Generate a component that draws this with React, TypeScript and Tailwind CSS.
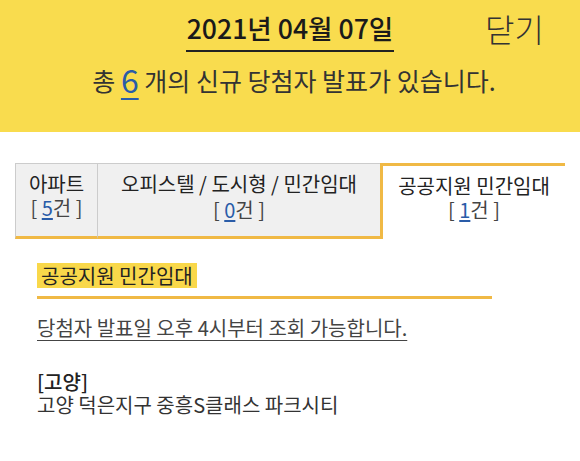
import React from "react";

const font = { fontFamily: '"Noto Sans CJK KR", "Noto Sans", sans-serif' };

function Count({ n }: { n: number }) {
  return (
    <span className="text-[#444]">
      [ <span className="text-[#2a5ca8] underline underline-offset-2">{n}</span>건 ]
    </span>
  );
}

export default function App() {
  return (
    <div className="w-[580px] h-[461px] bg-white overflow-hidden" style={font}>
      <div className="relative h-[132px] bg-[#f9dc4e] flex flex-col items-center pt-[11px]">
        <div className="text-[26.6px] leading-[34px] font-medium text-[#1a1a1a] border-b-2 border-[#222] pb-[5px] px-[1px]">
          2021년 04월 07일
        </div>
        <div className="absolute right-[36px] top-[8px] text-[32px] leading-[40px] text-[#333] font-light">닫기</div>
        <div className="mt-[9px] text-[25px] leading-[34px] text-[#333] flex items-end pl-[8px]">
          <span>총&nbsp;</span>
          <span className="text-[32px] leading-[36px] text-[#2a5ca8] underline underline-offset-[5px] decoration-[1.5px]">6</span>
          <span>&nbsp;개의 신규 당첨자 발표가 있습니다.</span>
        </div>
      </div>

      <div className="mt-[31px] mx-[15px] flex h-[76px] text-[20px] leading-[24px] text-[#222]">
        <div className="w-[82px] bg-[#f0f0f0] border-t border-l border-[#cccccc] border-b-[3px] border-b-[#f0b945] flex flex-col items-center pt-[8px]">
          <div>아파트</div>
          <Count n={5} />
        </div>
        <div className="w-[283px] bg-[#f0f0f0] border-t border-l border-[#cccccc] border-b-[3px] border-b-[#f0b945] flex flex-col items-center pt-[8px]">
          <div>오피스텔 / 도시형 / 민간임대</div>
          <div className="mt-[2px]"><Count n={0} /></div>
        </div>
        <div className="flex-1 bg-white border-t-[3px] border-l-[3px] border-[#f0b945] flex flex-col items-center pt-[8px]">
          <div>공공지원 민간임대</div>
          <Count n={1} />
        </div>
      </div>

      <div className="mx-[37px] mt-[24px] w-[455px]">
        <div className="inline-block bg-[#f9d84a] px-[4px] text-[20px] leading-[25px] text-[#222]">공공지원 민간임대</div>
        <div className="mt-[7px] h-[3px] bg-[#f0b945]" />
        <div className="mt-[16px] text-[20px] leading-[26px] text-[#444] underline underline-offset-[4px] decoration-1">
          당첨자 발표일 오후 4시부터 조회 가능합니다.
        </div>
        <div className="mt-[29px] text-[20px] leading-[23px] text-[#333]">
          <div className="font-medium text-[#222]">[고양]</div>
          <div>고양 덕은지구 중흥S클래스 파크시티</div>
        </div>
      </div>
    </div>
  );
}
